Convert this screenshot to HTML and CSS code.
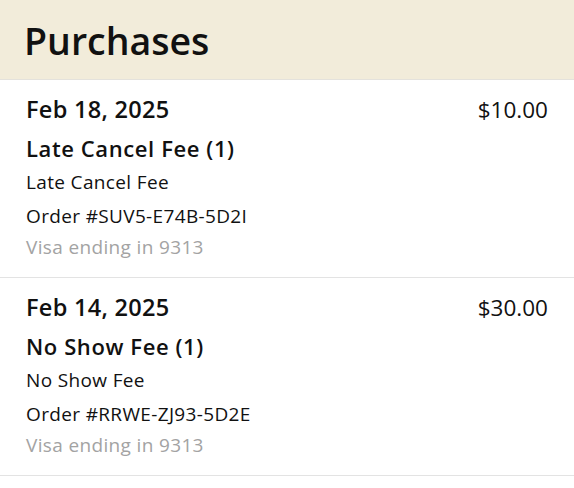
FILE: index.html
```html
<!DOCTYPE html>
<html>
<head>
<meta charset="utf-8">
<link rel="stylesheet" href="styles.css">
</head>
<body>
<header class="header">
  <h1 class="title">Purchases</h1>
</header>
<ul class="list">
  <li class="item">
    <div class="top">
      <span class="date">Feb 18, 2025</span>
      <span class="price">$10.00</span>
    </div>
    <div class="name">Late Cancel Fee (1)</div>
    <div class="line">Late Cancel Fee</div>
    <div class="line">Order #SUV5-E74B-5D2I</div>
    <div class="card">Visa ending in 9313</div>
  </li>
  <li class="item">
    <div class="top">
      <span class="date">Feb 14, 2025</span>
      <span class="price">$30.00</span>
    </div>
    <div class="name">No Show Fee (1)</div>
    <div class="line">No Show Fee</div>
    <div class="line">Order #RRWE-ZJ93-5D2E</div>
    <div class="card">Visa ending in 9313</div>
  </li>
</ul>
</body>
</html>
```
FILE: styles.css
```css
html, body {
  margin: 0;
  padding: 0;
  background: #ffffff;
  font-family: "Open Sans", Lato, sans-serif;
  color: #111111;
}
.header {
  background: #f2ecda;
  height: 79px;
  border-bottom: 1px solid #e4e2dc;
  display: flex;
  align-items: center;
  padding: 0 24px;
}
.title {
  margin: 0;
  font-size: 37.5px;
  font-weight: 600;
  line-height: 1;
  padding-top: 2px;
}
.list {
  list-style: none;
  margin: 0;
  padding: 0;
}
.item {
  padding: 14px 26px 16px 26px;
  border-bottom: 1px solid #e3e3e3;
}
.top {
  display: flex;
  justify-content: space-between;
  align-items: center;
  height: 30px;
}
.date {
  font-size: 23.5px;
  font-weight: 600;
  letter-spacing: 0.3px;
}
.price {
  font-size: 22.5px;
  font-weight: 400;
}
.name {
  margin-top: 7px;
  font-size: 22px;
  font-weight: 600;
  line-height: 34px;
  letter-spacing: 0.6px;
}
.line {
  font-size: 19px;
  line-height: 34px;
  letter-spacing: 0.35px;
}
.card {
  font-size: 19px;
  line-height: 28px;
  letter-spacing: 0.35px;
  color: #a3a3a3;
}
```
